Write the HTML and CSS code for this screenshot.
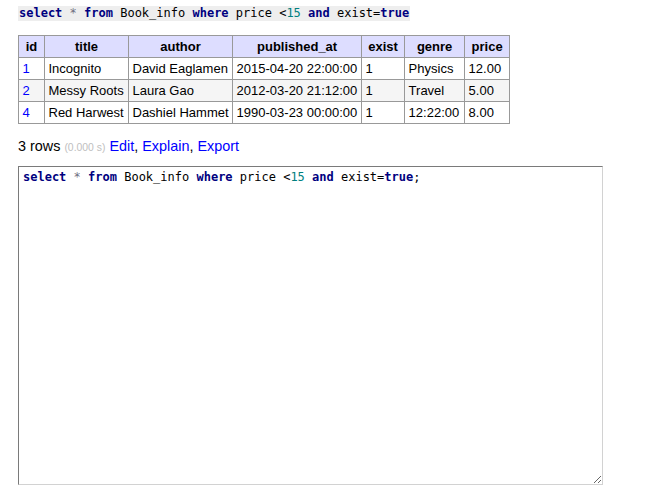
FILE: index.html
```html
<!DOCTYPE html>
<html>
<head>
<meta charset="utf-8">
<link rel="stylesheet" href="styles.css">
</head>
<body>
<p class="query"><code class="sql"><b class="kw">select</b> <span class="op">*</span> <b class="kw">from</b> Book_info <b class="kw">where</b> price &lt;<span class="num">15</span> <b class="kw">and</b> exist=<b class="kw">true</b></code></p>
<table class="result">
<thead>
<tr><th class="c-id">id</th><th class="c-title">title</th><th class="c-author">author</th><th class="c-pub">published_at</th><th class="c-exist">exist</th><th class="c-genre">genre</th><th class="c-price">price</th></tr>
</thead>
<tbody>
<tr><td><a href="#">1</a></td><td>Incognito</td><td>David Eaglamen</td><td>2015-04-20 22:00:00</td><td>1</td><td>Physics</td><td>12.00</td></tr>
<tr class="even"><td><a href="#">2</a></td><td>Messy Roots</td><td>Laura Gao</td><td>2012-03-20 21:12:00</td><td>1</td><td>Travel</td><td>5.00</td></tr>
<tr><td><a href="#">4</a></td><td>Red Harwest</td><td>Dashiel Hammet</td><td>1990-03-23 00:00:00</td><td>1</td><td>12:22:00</td><td>8.00</td></tr>
</tbody>
</table>
<p class="rows">3 rows <span class="time">(0.000 s)</span> <a href="#">Edit</a>, <a href="#">Explain</a>, <a href="#">Export</a></p>
<div class="editor"><b class="kw">select</b> <span class="op">*</span> <b class="kw">from</b> Book_info <b class="kw">where</b> price &lt;<span class="num">15</span> <b class="kw">and</b> exist=<b class="kw">true</b>;</div>
</body>
</html>
```
FILE: styles.css
```css
html, body {
  margin: 0;
  background: #fff;
}
body {
  padding: 0 0 0 18px;
  font-family: "Liberation Sans", Arial, sans-serif;
  font-size: 14.4px;
  color: #000;
}
a {
  color: #00f;
  text-decoration: none;
}
.query {
  margin: 0;
  padding-top: 6px;
  line-height: 15px;
}
.sql {
  display: inline-block;
  background: #eee;
  padding: 0 1px;
  font-family: "DejaVu Sans Mono", monospace;
  font-size: 12px;
  line-height: 15px;
  vertical-align: top;
}
.kw {
  color: #000080;
  font-weight: bold;
}
.op {
  color: #6f6f7f;
}
.num {
  color: #007f7f;
}
.result {
  margin-top: 14px;
  border-collapse: collapse;
  font-size: 13px;
  line-height: 16px;
}
.result th, .result td {
  border: 1px solid #999;
  padding: 3px 3.5px 2px;
  white-space: nowrap;
}
.result th {
  background: #ddf;
  font-weight: bold;
  text-align: center;
}
.result .c-id { width: 18px; }
.result .c-title { width: 76px; }
.result .c-author { width: 96px; }
.result .c-pub { width: 121px; }
.result .c-exist { width: 35px; }
.result .c-genre { width: 52px; }
.result .c-price { width: 37px; }
.result td {
  text-align: left;
}
.result tr.even td {
  background: #f5f5f5;
}
.rows {
  margin: 13px 0 9px;
  line-height: 18px;
}
.time {
  color: silver;
  font-size: 10.4px;
}
.editor {
  box-sizing: border-box;
  width: 585px;
  height: 319px;
  border-style: solid;
  border-width: 1px;
  border-color: #7a7a7a #d2d2d2 #d2d2d2 #7a7a7a;
  padding: 3px 4px;
  font-family: "DejaVu Sans Mono", monospace;
  font-size: 12px;
  line-height: 14px;
  white-space: pre;
  overflow: auto;
  resize: both;
}
```
